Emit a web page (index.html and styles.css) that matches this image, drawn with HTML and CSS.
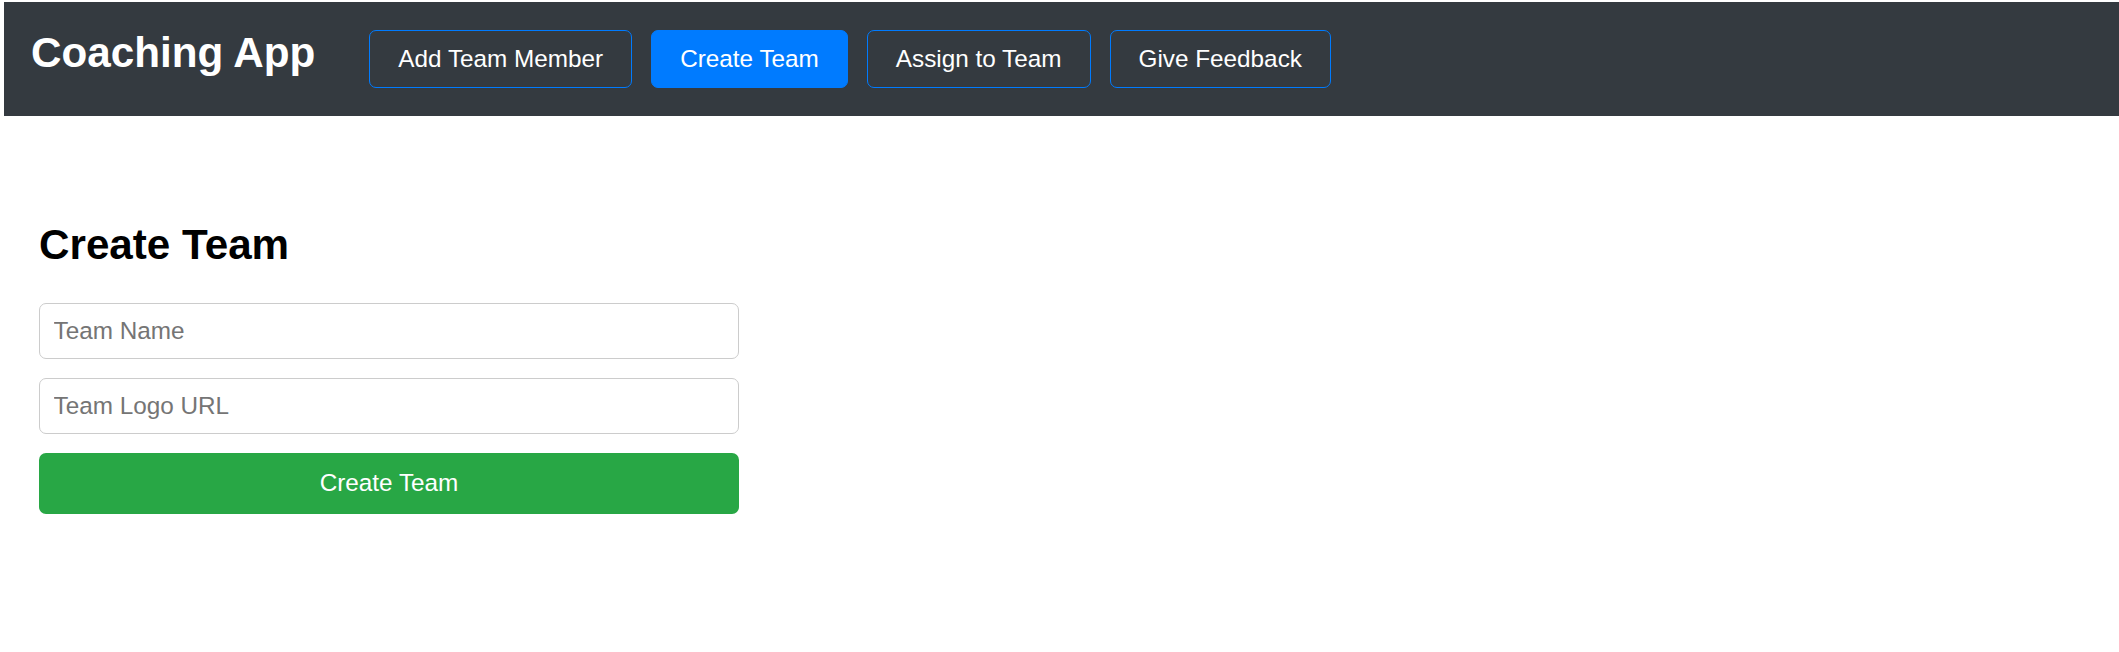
FILE: index.html
```html
<!DOCTYPE html>
<html lang="en">
<head>
<meta charset="utf-8">
<title>Coaching App</title>
<link rel="stylesheet" href="styles.css">
</head>
<body>
<header class="topbar">
  <h1 class="brand">Coaching App</h1>
  <nav class="nav">
    <button class="nav-btn">Add Team Member</button>
    <button class="nav-btn nav-btn-active">Create Team</button>
    <button class="nav-btn">Assign to Team</button>
    <button class="nav-btn">Give Feedback</button>
  </nav>
</header>
<main class="content">
  <h2 class="page-title">Create Team</h2>
  <form class="form">
    <input class="field" type="text" placeholder="Team Name">
    <input class="field" type="text" placeholder="Team Logo URL">
    <button class="submit" type="button">Create Team</button>
  </form>
</main>
</body>
</html>
```

FILE: styles.css
```css
* { box-sizing: border-box; }

html, body {
  background: #ffffff;
}

body {
  margin: 2px 0 0 4px;
  font-family: "Liberation Sans", Arial, sans-serif;
  color: #000;
}

.topbar {
  display: flex;
  align-items: flex-start;
  background: #343a40;
  padding: 28px 27px;
  height: 114px;
}

.brand {
  margin: -1px 0 0 0;
  font-size: 42.2px;
  font-weight: bold;
  line-height: normal;
  color: #ffffff;
  white-space: nowrap;
}

.nav {
  display: flex;
  gap: 19px;
  margin-left: 54px;
}

.nav-btn {
  font-family: "Liberation Sans", Arial, sans-serif;
  font-size: 24.3px;
  line-height: normal;
  color: #ffffff;
  background: transparent;
  border: 1px solid #007bff;
  border-radius: 7px;
  padding: 0 28px;
  height: 58px;
  white-space: nowrap;
  cursor: pointer;
}

.nav-btn-active {
  background: #007bff;
}

.content {
  padding: 105px 35px 0;
}

.page-title {
  margin: 0 0 33.5px 0;
  font-size: 42.2px;
  font-weight: bold;
  line-height: normal;
}

.form {
  display: flex;
  flex-direction: column;
  gap: 18.5px;
  width: 700px;
}

.field {
  font-family: "Liberation Sans", Arial, sans-serif;
  font-size: 24.3px;
  line-height: normal;
  height: 56.5px;
  padding: 0 13.5px;
  border: 1px solid #cccccc;
  border-radius: 7px;
  color: #333;
  background: #fff;
}

.field::placeholder {
  color: #757575;
}

.submit {
  font-family: "Liberation Sans", Arial, sans-serif;
  font-size: 24.3px;
  line-height: normal;
  height: 61px;
  border: none;
  border-radius: 7px;
  background: #28a745;
  color: #ffffff;
  cursor: pointer;
}
```
